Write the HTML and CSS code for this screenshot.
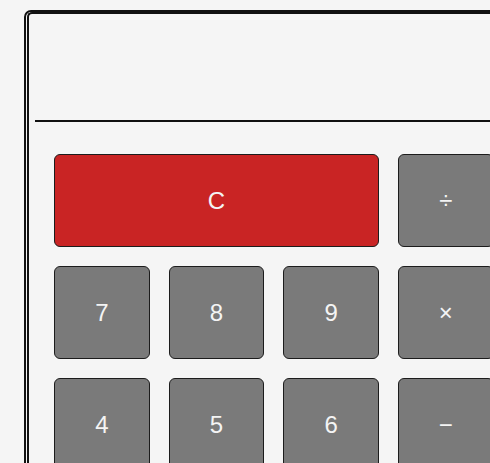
FILE: index.html
```html
<!DOCTYPE html>
<html lang="en">
<head>
<meta charset="utf-8">
<title>Calculator</title>
<link rel="stylesheet" href="styles.css">
</head>
<body>
<div class="calc">
  <div class="calc-inner">
    <div class="display"></div>
    <div class="keys">
      <button class="key key-clear">C</button>
      <button class="key">÷</button>
      <button class="key">7</button>
      <button class="key">8</button>
      <button class="key">9</button>
      <button class="key">×</button>
      <button class="key">4</button>
      <button class="key">5</button>
      <button class="key">6</button>
      <button class="key">−</button>
      <button class="key">1</button>
      <button class="key">2</button>
      <button class="key">3</button>
      <button class="key">+</button>
      <button class="key key-zero">0</button>
      <button class="key">.</button>
      <button class="key">=</button>
    </div>
  </div>
</div>
</body>
</html>
```
FILE: styles.css
```css
html, body {
  margin: 0;
  background: #f5f5f5;
  overflow: hidden;
}
body {
  padding: 10px 0 0 24px;
  font-family: "Liberation Sans", Arial, sans-serif;
}
.calc {
  width: 520px;
  border: 2px solid #111;
  border-radius: 7px;
}
.calc-inner {
  margin-left: 1px;
  border-top: 2px solid #111;
  border-left: 2px solid #111;
  border-top-left-radius: 5px;
}
.display {
  height: 106px;
  margin-left: 6px;
  border-bottom: 2px solid #111;
}
.keys {
  display: grid;
  grid-template-columns: repeat(4, 95.67px);
  grid-auto-rows: 93px;
  gap: 19px;
  padding: 32px 25px 25px;
}
.key {
  box-sizing: border-box;
  margin: 0;
  border: 1px solid #1c1c1c;
  border-radius: 6px;
  background: #7a7a7a;
  color: #f4f4f4;
  font-family: inherit;
  font-size: 24px;
  padding: 0;
}
.key-clear {
  grid-column: span 3;
  background: #c92424;
}
.key-zero {
  grid-column: span 2;
}
```
